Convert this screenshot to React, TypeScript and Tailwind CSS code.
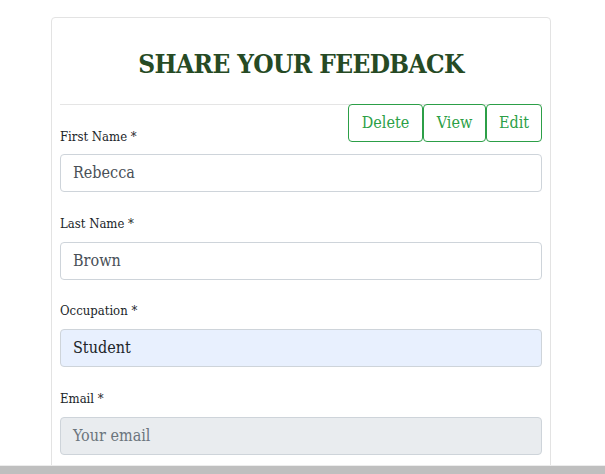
const fields = [
  { label: "First Name *", value: "Rebecca", kind: "filled", gap: "mt-[22px]" },
  { label: "Last Name *", value: "Brown", kind: "filled", gap: "mt-[22px]" },
  { label: "Occupation *", value: "Student", kind: "autofill", gap: "mt-[21px]" },
  { label: "Email *", value: "", placeholder: "Your email", kind: "disabled", gap: "mt-[22px]" },
];

const font = { fontFamily: '"DejaVu Serif Condensed", "DejaVu Serif", serif' };

function Field({ value, placeholder, kind }: { value: string; placeholder?: string; kind: string }) {
  const box =
    kind === "autofill"
      ? "bg-[#e8f0fe] text-[#212529]"
      : kind === "disabled"
      ? "bg-[#e9ecef] text-[#6c757d]"
      : "bg-white text-[#495057]";
  return (
    <div className={`flex h-[38px] items-center rounded border border-[#ced4da] px-3 text-[16px] ${box}`}>
      {value || placeholder}
    </div>
  );
}

export default function App() {
  return (
    <div className="flex h-[474px] w-[605px] flex-col overflow-hidden bg-white" style={font}>
      <div className="flex-1 overflow-hidden">
        <div className="ml-[51px] mt-[17px] h-[460px] w-[500px] rounded-t border border-[#e3e3e3] px-[8px]">
          <h2 className="pt-[28px] text-center text-[26px] font-bold leading-[36px] tracking-[-0.6px] text-[#264a24]">
            SHARE YOUR FEEDBACK
          </h2>
          <div className="mt-[22px] h-px bg-[#e5e5e5]" />
          <div className="-mt-px flex items-start justify-between">
            <label className="mt-[23px] text-[13px] leading-5 text-[#212529]">{fields[0].label}</label>
            <div className="flex text-[16px] text-[#2c9f47]">
              <button className="h-[38px] w-[75px] rounded border border-[#2c9f47] bg-white">Delete</button>
              <button className="h-[38px] w-[63px] rounded border border-[#2c9f47] bg-white">View</button>
              <button className="h-[38px] w-[56px] rounded border border-[#2c9f47] bg-white">Edit</button>
            </div>
          </div>
          <div className="mt-[7px]">
            <Field {...fields[0]} />
          </div>
          {fields.slice(1).map((f) => (
            <div key={f.label} className={f.gap}>
              <label className="block text-[13px] leading-5 text-[#212529]">{f.label}</label>
              <div className="mt-[8px]">
                <Field {...f} />
              </div>
            </div>
          ))}
        </div>
      </div>
      <div className="h-px bg-[#ececec]" />
      <div className="h-[8px] bg-[#bfbfbf]" />
    </div>
  );
}
